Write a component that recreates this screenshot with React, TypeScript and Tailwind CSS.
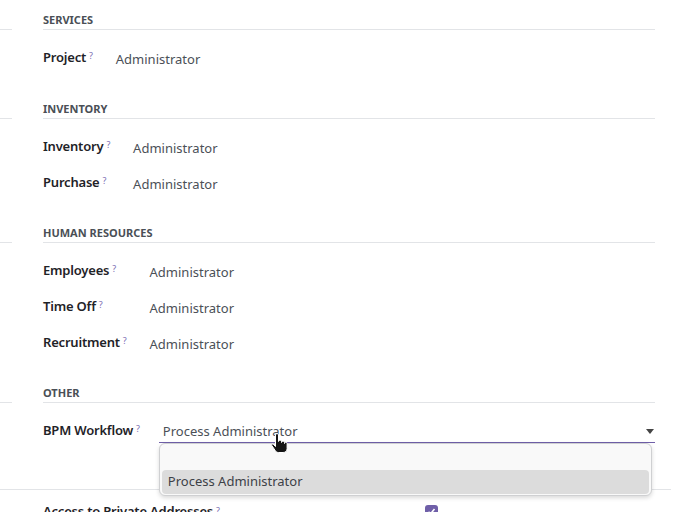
import React from "react";

const Q = () => (
  <sup className="ml-[3px] text-[9px] font-normal text-[#7a6db3] relative -top-[2px]">?</sup>
);

function Header({ title, className = "" }: { title: string; className?: string }) {
  return (
    <div className={"flex items-end " + className}>
      <div className="w-[12px] border-b border-[#e2e4e7]" />
      <div className="ml-[31px] flex-1 border-b border-[#e2e4e7] pb-[1px] text-[11px] leading-[16px] font-bold uppercase text-[#4a4f56]">
        {title}
      </div>
    </div>
  );
}

function Fields({ labels, className = "" }: { labels: string[]; className?: string }) {
  return (
    <div className={"ml-[43px] grid grid-cols-[auto_1fr] " + className}>
      {labels.map((l) => (
        <React.Fragment key={l}>
          <div className="h-[36px] flex items-center pr-[23px] text-[13px] font-semibold tracking-[-0.2px] text-[#1f2328]">
            {l}
            <Q />
          </div>
          <div className="h-[36px] flex items-center pt-[3px] text-[13px] text-[#4b5057]">Administrator</div>
        </React.Fragment>
      ))}
    </div>
  );
}

export default function App() {
  return (
    <div className="relative w-[677px] h-[512px] overflow-hidden bg-white font-['Noto_Sans',sans-serif]">
      <div className="pt-[12px] pr-[22px]">
        <Header title="Services" />
        <Fields labels={["Project"]} className="mt-[10px]" />
        <Header title="Inventory" className="mt-[25px]" />
        <Fields labels={["Inventory", "Purchase"]} className="mt-[10px]" />
        <Header title="Human Resources" className="mt-[24px]" />
        <Fields labels={["Employees", "Time Off", "Recruitment"]} className="mt-[10px]" />
        <Header title="Other" className="mt-[24px]" />
        <div className="ml-[43px] mt-[10px] grid grid-cols-[auto_1fr]">
          <div className="h-[36px] flex items-center pr-[23px] text-[13px] font-semibold tracking-[-0.2px] text-[#1f2328]">
            BPM Workflow
            <Q />
          </div>
          <div className="h-[36px] flex items-start">
            <div className="relative -ml-[4px] mt-[6px] flex-1 h-[24px] pl-[4px] flex items-center border-b border-[#6f5fa8] text-[13px] text-[#4b5057]">
              <span className="pt-[2px]">Process Administrator</span>
              <svg className="absolute right-[1px] top-[10px]" width="8" height="5" viewBox="0 0 8 5">
                <path d="M0 0 H8 L4 5 Z" fill="#444" />
              </svg>
              <div className="absolute left-0 top-[24px] w-[493px] h-[53px] rounded-[6px] border border-[#cfd0d2] bg-[#f9f9f9] shadow-[0_2px_4px_rgba(0,0,0,0.15)]">
                <div className="absolute left-[2px] right-[2px] top-[26px] h-[24px] rounded-[4px] bg-[#dcdcdc] pl-[6px] flex items-center text-[13px] text-[#3d4147]">
                  Process Administrator
                </div>
              </div>
            </div>
          </div>
        </div>
      </div>
      <div className="mt-[40px] w-[671px] border-b border-[#e2e4e7]" />
      <div className="ml-[43px] mt-[12px] flex items-center">
        <div className="w-[382px] text-[13px] font-semibold tracking-[-0.2px] text-[#1f2328]">
          Access to Private Addresses
          <Q />
        </div>
        <div className="w-[13px] h-[13px] rounded-[3px] bg-[#6f5fa8] flex items-center justify-center">
          <svg width="9" height="9" viewBox="0 0 9 9">
            <path d="M1.5 4.8 L3.6 6.8 L7.5 2" stroke="#fff" strokeWidth="1.6" fill="none" />
          </svg>
        </div>
      </div>
      <svg className="absolute left-[270px] top-[433px]" width="18" height="21" viewBox="0 0 18 21">
        <path
          d="M5.5 2 a1.5 1.5 0 0 1 3 0 V8.5 a1.5 1.5 0 0 1 3 0 V9.5 a1.5 1.5 0 0 1 3 0 v1 a1.3 1.3 0 0 1 2.6 0 V15.5 c0 2.5 -1.5 4 -4 4 H8.5 c-1.5 0 -2.5 -0.8 -3.3 -2 L1.8 12.5 c-0.6 -0.9 0.5 -2 1.4 -1.3 L5.5 13.5 Z"
          fill="#151515"
          stroke="#fff"
          strokeWidth="1"
        />
      </svg>
    </div>
  );
}
